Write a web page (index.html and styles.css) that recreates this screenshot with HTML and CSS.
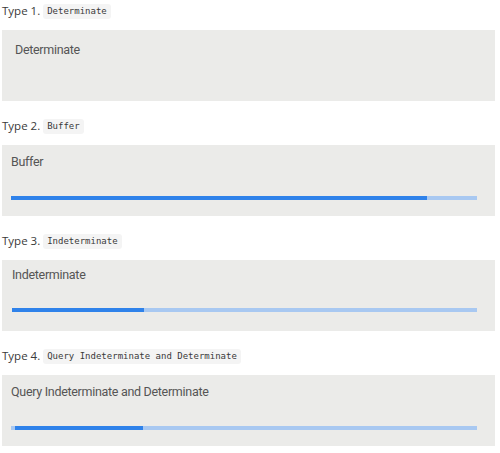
FILE: index.html
```html
<!DOCTYPE html>
<html>
<head>
<meta charset="utf-8">
<link rel="stylesheet" href="styles.css">
</head>
<body>
  <section class="demo">
    <p class="heading">Type 1. <code class="chip">Determinate</code></p>
    <div class="panel panel-first">
      <div class="label">Determinate</div>
    </div>
  </section>
  <section class="demo">
    <p class="heading">Type 2. <code class="chip">Buffer</code></p>
    <div class="panel">
      <div class="label">Buffer</div>
      <div class="track">
        <div class="fill" style="width:89.3%"></div>
      </div>
    </div>
  </section>
  <section class="demo">
    <p class="heading">Type 3. <code class="chip">Indeterminate</code></p>
    <div class="panel">
      <div class="label label-tight">Indeterminate</div>
      <div class="track track-high">
        <div class="fill" style="width:28.3%"></div>
      </div>
    </div>
  </section>
  <section class="demo">
    <p class="heading">Type 4. <code class="chip">Query Indeterminate and Determinate</code></p>
    <div class="panel">
      <div class="label">Query Indeterminate and Determinate</div>
      <div class="track">
        <div class="fill fill-query" style="width:27.5%"></div>
      </div>
    </div>
  </section>
</body>
</html>
```
FILE: styles.css
```css
html, body {
  margin: 0;
  padding: 0;
  background: #ffffff;
}
body {
  padding: 1px 5px 0 2px;
  font-family: "Open Sans", "Noto Sans", sans-serif;
}
.demo {
  display: flex;
  flex-direction: column;
  margin-bottom: 15px;
}
.heading {
  margin: 0;
  height: 20px;
  line-height: 20px;
  font-size: 11.5px;
  color: #3a3a3a;
  display: flex;
  align-items: center;
  gap: 3px;
}
.chip {
  font-family: "DejaVu Sans Mono", "Liberation Mono", monospace;
  font-size: 9px;
  line-height: 15px;
  padding: 0 4px;
  background: #f4f4f4;
  border-radius: 3px;
  color: #3a3a3a;
}
.panel {
  margin-top: 9px;
  height: 71px;
  box-sizing: border-box;
  background: #ebebe9;
  padding: 8px 18px 0 9px;
  display: flex;
  flex-direction: column;
}
.label {
  font-family: Roboto, "Noto Sans", sans-serif;
  font-size: 12.5px;
  letter-spacing: -0.3px;
  line-height: 18px;
  color: #555;
}
.label-tight {
  margin-top: -2px;
  margin-left: 1px;
}
.panel-first {
  padding: 11px 18px 0 13px;
}
.track {
  margin-top: 25px;
  height: 4px;
  background: #a8c8f1;
  display: flex;
}
.track-high {
  margin-top: 24px;
  margin-left: 1px;
}
.fill {
  height: 100%;
  background: #2f82ea;
}
.fill-query {
  margin-left: 4px;
}
```
